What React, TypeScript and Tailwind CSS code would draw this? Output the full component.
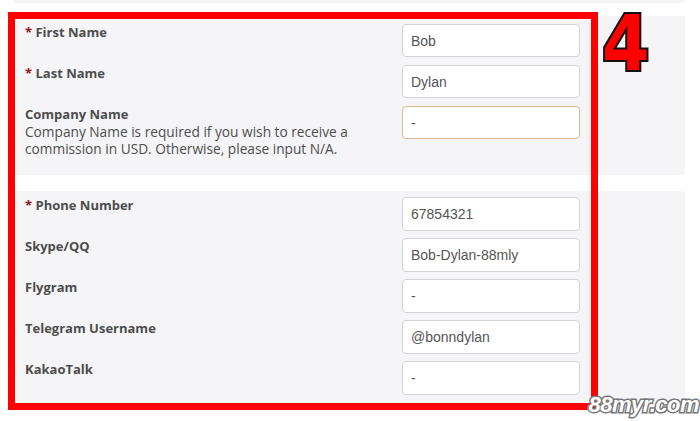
import React from "react";

interface Field {
  label: string;
  value: string;
  required?: boolean;
  note?: string;
  focused?: boolean;
}

const personal: Field[] = [
  { label: "First Name", value: "Bob", required: true },
  { label: "Last Name", value: "Dylan", required: true },
  {
    label: "Company Name",
    value: "-",
    focused: true,
    note: "Company Name is required if you wish to receive a commission in USD. Otherwise, please input N/A.",
  },
];

const contact: Field[] = [
  { label: "Phone Number", value: "67854321", required: true },
  { label: "Skype/QQ", value: "Bob-Dylan-88mly" },
  { label: "Flygram", value: "-" },
  { label: "Telegram Username", value: "@bonndylan" },
  { label: "KakaoTalk", value: "-" },
];

function FormRow({ field, tall }: { field: Field; tall?: boolean }) {
  return (
    <div className="flex items-start justify-between">
      <div className="pr-4 text-[13px] leading-[17px] text-[#4d4d4d]">
        <div className="font-bold">
          {field.required && <span className="text-[#9b1212]">* </span>}
          {field.label}
        </div>
        {field.note && <p className="w-[345px] text-[13.7px] font-normal">{field.note}</p>}
      </div>
      <input
        readOnly
        value={field.value}
        className={`w-[178px] shrink-0 rounded-[4px] border bg-white px-[8px] font-['Liberation_Sans',Arial,sans-serif] text-[14px] text-[#555] outline-none ${
          tall ? "h-[34px]" : "h-[33px]"
        } ${field.focused ? "border-[#d8b993] bg-[#fffefb]" : "border-[#d4d4d4]"}`}
      />
    </div>
  );
}

export default function App() {
  return (
    <div className="relative h-[421px] w-[700px] overflow-hidden bg-white font-['Open_Sans','Noto_Sans',sans-serif]">
      <div className="ml-[13px] h-[3px] w-[672px] bg-[#f5f5f7]" />

      {/* Personal details */}
      <div className="ml-[14px] mt-[13px] flex w-[671px] flex-col gap-2 bg-[#f5f5f7] pb-[18px] pl-[11px] pr-[105px] pt-2">
        {personal.map((f) => (
          <FormRow key={f.label} field={f} />
        ))}
      </div>

      {/* Contact details */}
      <div className="ml-[14px] mt-[16px] flex w-[671px] flex-col gap-[7px] bg-[#f5f5f7] pb-[8px] pl-[11px] pr-[105px] pt-[6px]">
        {contact.map((f) => (
          <FormRow key={f.label} field={f} tall />
        ))}
      </div>

      {/* annotation overlay */}
      <div className="pointer-events-none absolute left-[8px] top-[12px] h-[398px] w-[590px] border-[7px] border-[#ff0000]" />
      <div className="absolute left-[602px] top-[6px] font-['DejaVu_Sans_Condensed','DejaVu_Sans',sans-serif] text-[76px] font-bold leading-none text-[#ff0000] [-webkit-text-stroke:4px_#111] [paint-order:stroke_fill]">
        4
      </div>
      <div className="absolute right-[1px] top-[394px] font-['Liberation_Sans',Arial,sans-serif] text-[22px] font-bold italic leading-none tracking-[-0.5px] text-white [-webkit-text-stroke:3px_#777] [paint-order:stroke_fill]">
        88myr.com
      </div>
    </div>
  );
}
